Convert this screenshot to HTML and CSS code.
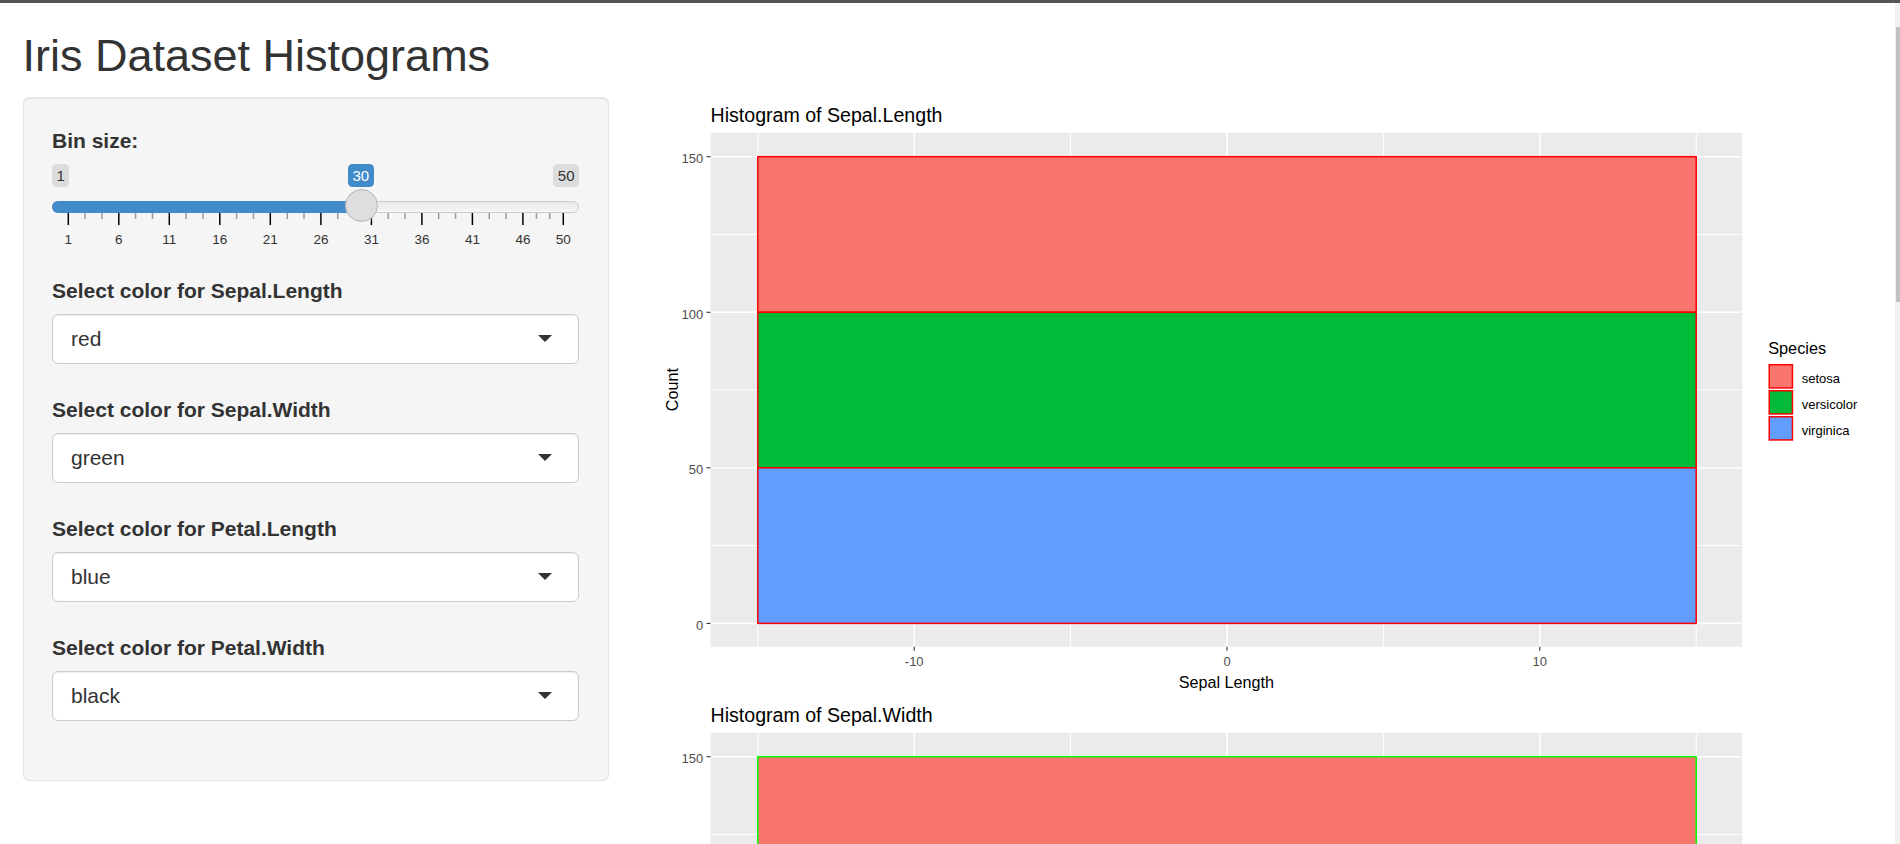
FILE: index.html
```html
<!DOCTYPE html>
<html lang="en">
<head>
<meta charset="utf-8">
<title>Iris Dataset Histograms</title>
<link rel="stylesheet" href="styles.css">
</head>
<body>
<div class="topbar"></div>
<div class="container">
  <h2 class="title">Iris Dataset Histograms</h2>
  <div class="row">
    <div class="col-side">
      <div class="well">
        <div class="form-group">
          <label class="control-label">Bin size:</label>
          <div class="irs">
            <span class="irs-badge irs-min">1</span>
            <span class="irs-badge irs-max">50</span>
            <span class="irs-badge irs-single">30</span>
            <div class="irs-line"></div>
            <div class="irs-bar"></div>
            <svg class="irs-grid" width="527" height="84" viewBox="0 0 527 84">
              <g class="pol-big">
                <line x1="16.3" x2="16.3" y1="49" y2="61"/>
                <line x1="66.8" x2="66.8" y1="49" y2="61"/>
                <line x1="117.3" x2="117.3" y1="49" y2="61"/>
                <line x1="167.8" x2="167.8" y1="49" y2="61"/>
                <line x1="218.3" x2="218.3" y1="49" y2="61"/>
                <line x1="268.9" x2="268.9" y1="49" y2="61"/>
                <line x1="319.4" x2="319.4" y1="49" y2="61"/>
                <line x1="369.9" x2="369.9" y1="49" y2="61"/>
                <line x1="420.4" x2="420.4" y1="49" y2="61"/>
                <line x1="470.9" x2="470.9" y1="49" y2="61"/>
                <line x1="511.3" x2="511.3" y1="49" y2="61"/>
              </g>
              <g class="pol-small">
                <line x1="33.1" x2="33.1" y1="49" y2="55"/>
                <line x1="49.9" x2="49.9" y1="49" y2="55"/>
                <line x1="83.6" x2="83.6" y1="49" y2="55"/>
                <line x1="100.5" x2="100.5" y1="49" y2="55"/>
                <line x1="134.1" x2="134.1" y1="49" y2="55"/>
                <line x1="151" x2="151" y1="49" y2="55"/>
                <line x1="184.6" x2="184.6" y1="49" y2="55"/>
                <line x1="201.5" x2="201.5" y1="49" y2="55"/>
                <line x1="235.2" x2="235.2" y1="49" y2="55"/>
                <line x1="252" x2="252" y1="49" y2="55"/>
                <line x1="285.7" x2="285.7" y1="49" y2="55"/>
                <line x1="302.5" x2="302.5" y1="49" y2="55"/>
                <line x1="336.2" x2="336.2" y1="49" y2="55"/>
                <line x1="353.1" x2="353.1" y1="49" y2="55"/>
                <line x1="386.7" x2="386.7" y1="49" y2="55"/>
                <line x1="403.6" x2="403.6" y1="49" y2="55"/>
                <line x1="437.2" x2="437.2" y1="49" y2="55"/>
                <line x1="454.1" x2="454.1" y1="49" y2="55"/>
                <line x1="484.4" x2="484.4" y1="49" y2="55"/>
                <line x1="497.8" x2="497.8" y1="49" y2="55"/>
              </g>
              <g class="grid-text">
                <text x="16.3" y="80.3">1</text>
                <text x="66.8" y="80.3">6</text>
                <text x="117.3" y="80.3">11</text>
                <text x="167.8" y="80.3">16</text>
                <text x="218.3" y="80.3">21</text>
                <text x="268.9" y="80.3">26</text>
                <text x="319.4" y="80.3">31</text>
                <text x="369.9" y="80.3">36</text>
                <text x="420.4" y="80.3">41</text>
                <text x="470.9" y="80.3">46</text>
                <text x="511.3" y="80.3">50</text>
              </g>
            </svg>
            <span class="irs-handle"></span>
          </div>
        </div>
        <div class="form-group">
          <label class="control-label">Select color for Sepal.Length</label>
          <div class="select"><span>red</span><span class="caret"></span></div>
        </div>
        <div class="form-group">
          <label class="control-label">Select color for Sepal.Width</label>
          <div class="select"><span>green</span><span class="caret"></span></div>
        </div>
        <div class="form-group">
          <label class="control-label">Select color for Petal.Length</label>
          <div class="select"><span>blue</span><span class="caret"></span></div>
        </div>
        <div class="form-group">
          <label class="control-label">Select color for Petal.Width</label>
          <div class="select"><span>black</span><span class="caret"></span></div>
        </div>
      </div>
    </div>
    <div class="col-main">
      <svg class="plot" width="1215" height="600" viewBox="0 0 1215 600">
        <text class="p-title" x="57.5" y="25.3">Histogram of Sepal.Length</text>
        <rect class="panel" x="57.5" y="35.7" width="1031.7" height="514"/>
        <g class="grid-minor">
          <line x1="57.5" x2="1089.2" y1="448.6" y2="448.6"/>
          <line x1="57.5" x2="1089.2" y1="293" y2="293"/>
          <line x1="57.5" x2="1089.2" y1="137.5" y2="137.5"/>
          <line x1="104.8" x2="104.8" y1="35.7" y2="549.7"/>
          <line x1="417.6" x2="417.6" y1="35.7" y2="549.7"/>
          <line x1="730.4" x2="730.4" y1="35.7" y2="549.7"/>
          <line x1="1043.2" x2="1043.2" y1="35.7" y2="549.7"/>
        </g>
        <g class="grid-major">
          <line x1="57.5" x2="1089.2" y1="526.4" y2="526.4"/>
          <line x1="57.5" x2="1089.2" y1="370.8" y2="370.8"/>
          <line x1="57.5" x2="1089.2" y1="215.3" y2="215.3"/>
          <line x1="57.5" x2="1089.2" y1="59.7" y2="59.7"/>
          <line x1="261.2" x2="261.2" y1="35.7" y2="549.7"/>
          <line x1="574" x2="574" y1="35.7" y2="549.7"/>
          <line x1="886.8" x2="886.8" y1="35.7" y2="549.7"/>
        </g>
        <g class="bars out-red">
          <rect class="f-setosa" x="104.8" y="59.7" width="938.4" height="155.6"/>
          <rect class="f-versicolor" x="104.8" y="215.3" width="938.4" height="155.5"/>
          <rect class="f-virginica" x="104.8" y="370.8" width="938.4" height="155.6"/>
        </g>
        <g class="ticks">
          <line x1="53.5" x2="57.5" y1="526.4" y2="526.4"/>
          <line x1="53.5" x2="57.5" y1="370.8" y2="370.8"/>
          <line x1="53.5" x2="57.5" y1="215.3" y2="215.3"/>
          <line x1="53.5" x2="57.5" y1="59.7" y2="59.7"/>
          <line x1="261.2" x2="261.2" y1="549.7" y2="553.7"/>
          <line x1="574" x2="574" y1="549.7" y2="553.7"/>
          <line x1="886.8" x2="886.8" y1="549.7" y2="553.7"/>
        </g>
        <g class="ytick">
          <text x="50.2" y="532.6">0</text>
          <text x="50.2" y="377">50</text>
          <text x="50.2" y="221.5">100</text>
          <text x="50.2" y="65.9">150</text>
        </g>
        <g class="xtick">
          <text x="261.2" y="569">-10</text>
          <text x="574" y="569">0</text>
          <text x="886.8" y="569">10</text>
        </g>
        <text class="a-title" x="573.4" y="590.5">Sepal Length</text>
        <text class="a-title" transform="translate(24.8 292.7) rotate(-90)">Count</text>
        <text class="l-title" x="1115.2" y="257.3">Species</text>
        <g class="out-red">
          <rect class="f-setosa" x="1116.25" y="267.75" width="23.2" height="23.2"/>
          <rect class="f-versicolor" x="1116.25" y="293.75" width="23.2" height="23.2"/>
          <rect class="f-virginica" x="1116.25" y="319.75" width="23.2" height="23.2"/>
        </g>
        <g class="l-text">
          <text x="1148.7" y="285.8">setosa</text>
          <text x="1148.7" y="311.6">versicolor</text>
          <text x="1148.7" y="337.6">virginica</text>
        </g>
      </svg>
      <svg class="plot" width="1215" height="600" viewBox="0 0 1215 600">
        <text class="p-title" x="57.5" y="25.3">Histogram of Sepal.Width</text>
        <rect class="panel" x="57.5" y="35.7" width="1031.7" height="514"/>
        <g class="grid-minor">
          <line x1="57.5" x2="1089.2" y1="448.6" y2="448.6"/>
          <line x1="57.5" x2="1089.2" y1="293" y2="293"/>
          <line x1="57.5" x2="1089.2" y1="137.5" y2="137.5"/>
          <line x1="104.8" x2="104.8" y1="35.7" y2="549.7"/>
          <line x1="417.6" x2="417.6" y1="35.7" y2="549.7"/>
          <line x1="730.4" x2="730.4" y1="35.7" y2="549.7"/>
          <line x1="1043.2" x2="1043.2" y1="35.7" y2="549.7"/>
        </g>
        <g class="grid-major">
          <line x1="57.5" x2="1089.2" y1="526.4" y2="526.4"/>
          <line x1="57.5" x2="1089.2" y1="370.8" y2="370.8"/>
          <line x1="57.5" x2="1089.2" y1="215.3" y2="215.3"/>
          <line x1="57.5" x2="1089.2" y1="59.7" y2="59.7"/>
          <line x1="261.2" x2="261.2" y1="35.7" y2="549.7"/>
          <line x1="574" x2="574" y1="35.7" y2="549.7"/>
          <line x1="886.8" x2="886.8" y1="35.7" y2="549.7"/>
        </g>
        <g class="bars out-green">
          <rect class="f-setosa" x="104.8" y="59.7" width="938.4" height="155.6"/>
          <rect class="f-versicolor" x="104.8" y="215.3" width="938.4" height="155.5"/>
          <rect class="f-virginica" x="104.8" y="370.8" width="938.4" height="155.6"/>
        </g>
        <g class="ticks">
          <line x1="53.5" x2="57.5" y1="526.4" y2="526.4"/>
          <line x1="53.5" x2="57.5" y1="370.8" y2="370.8"/>
          <line x1="53.5" x2="57.5" y1="215.3" y2="215.3"/>
          <line x1="53.5" x2="57.5" y1="59.7" y2="59.7"/>
        </g>
        <g class="ytick">
          <text x="50.2" y="65.9">150</text>
        </g>
      </svg>
    </div>
  </div>
</div>
<div class="scrollbar"><div class="scrollbar-thumb"></div></div>
</body>
</html>
```
FILE: styles.css
```css
* { box-sizing: border-box; }

html, body {
  margin: 0;
  height: 100%;
  overflow: hidden;
  background: #fff;
}

body {
  font-family: "Liberation Sans", Arial, Helvetica, sans-serif;
  font-size: 21px;
  color: #333;
}

.topbar {
  height: 3px;
  background: #555;
}

.container {
  width: 1892px;
  padding: 0 22.5px;
}

.title {
  margin: 28.3px 0 16.2px;
  font-size: 45px;
  font-weight: 400;
  line-height: 49.5px;
  color: #333;
}

.row {
  display: flex;
  align-items: flex-start;
  margin: 0 -22.5px;
}

.col-side {
  flex: 0 0 631px;
  padding: 0 22.5px;
}

.col-main {
  flex: 1;
  padding: 0 22px 0 21.5px;
  display: flex;
  flex-direction: column;
}

.well {
  background: #f5f5f5;
  border: 1px solid #e3e3e3;
  border-radius: 6px;
  padding: 28px 28.5px;
  box-shadow: inset 0 1.5px 1.5px rgba(0, 0, 0, 0.05);
}

.form-group {
  margin-bottom: 30.7px;
}

.control-label {
  display: block;
  font-size: 21px;
  font-weight: 700;
  line-height: 30px;
  margin-bottom: 8.3px;
  color: #333;
}

/* slider */
.irs {
  position: relative;
  height: 81px;
}

.irs-badge {
  position: absolute;
  top: 0;
  font-size: 15px;
  line-height: 20px;
  padding: 1.5px 4.5px;
  border-radius: 4.5px;
  white-space: nowrap;
}

.irs-min { left: 0; background: #dcdcdc; color: #333; }
.irs-max { right: 0; background: #dcdcdc; color: #333; }
.irs-single { left: 296px; background: #428bca; color: #fff; }

.irs-line {
  position: absolute;
  top: 37px;
  left: 0;
  right: 0;
  height: 12px;
  border: 1px solid #cccccc;
  border-radius: 12px;
  background: linear-gradient(to bottom, #dedede -50%, #ffffff 150%);
}

.irs-bar {
  position: absolute;
  top: 37px;
  left: 0;
  width: 310px;
  height: 12px;
  background: #428bca;
  border-radius: 12px 0 0 12px;
}

.irs-grid {
  position: absolute;
  top: 0;
  left: 0;
  overflow: visible;
}

.pol-big line { stroke: #000; stroke-width: 1.5; }
.pol-small line { stroke: #999; stroke-width: 1.5; }

.grid-text text {
  font-family: "Liberation Sans", Arial, sans-serif;
  font-size: 13.5px;
  fill: #333;
  text-anchor: middle;
}

.irs-handle {
  position: absolute;
  top: 24.8px;
  left: 292.8px;
  width: 33px;
  height: 33px;
  border-radius: 50%;
  background: #dedede;
  border: 1.5px solid #b4b4b4;
  box-shadow: 1px 1px 3px rgba(255, 255, 255, 0.3);
}

/* select */
.select {
  height: 50px;
  background: #fff;
  border: 1px solid #ccc;
  border-radius: 6px;
  padding: 0 18px;
  display: flex;
  align-items: center;
  justify-content: space-between;
  font-size: 21px;
  color: #333;
  box-shadow: inset 0 1px 1px rgba(0, 0, 0, 0.075);
}

.caret {
  width: 0;
  height: 0;
  border-style: solid;
  border-width: 7.5px 7.5px 0 7.5px;
  border-color: #333 transparent transparent transparent;
  margin-right: 8px;
  margin-top: -2px;
}

/* plots */
.plot {
  display: block;
  font-family: "Liberation Sans", Arial, sans-serif;
}

.panel { fill: #ebebeb; }

.grid-minor line { stroke: #fff; stroke-width: 1; }
.grid-major line { stroke: #fff; stroke-width: 1.6; }

.f-setosa { fill: #f8766d; }
.f-versicolor { fill: #00ba38; }
.f-virginica { fill: #619cff; }

.out-red rect { stroke: #ff0000; stroke-width: 1.5; }
.out-green rect { stroke: #00ff00; stroke-width: 1.5; }

.ticks line { stroke: #333; stroke-width: 1.1; }

.ytick text {
  font-size: 13px;
  fill: #4d4d4d;
  text-anchor: end;
}

.xtick text {
  font-size: 13px;
  fill: #4d4d4d;
  text-anchor: middle;
}

.p-title {
  font-size: 19.6px;
  fill: #000;
}

.a-title {
  font-size: 16.2px;
  fill: #000;
  text-anchor: middle;
}

.l-title {
  font-size: 16.3px;
  fill: #000;
}

.l-text text {
  font-size: 13px;
  fill: #000;
}

/* scrollbar strip */
.scrollbar {
  position: fixed;
  top: 3px;
  right: 0;
  width: 5px;
  bottom: 0;
  background: #f1f1f1;
}

.scrollbar-thumb {
  position: absolute;
  top: 24px;
  left: 1px;
  right: 0;
  height: 275px;
  background: #c1c1c1;
}
```
